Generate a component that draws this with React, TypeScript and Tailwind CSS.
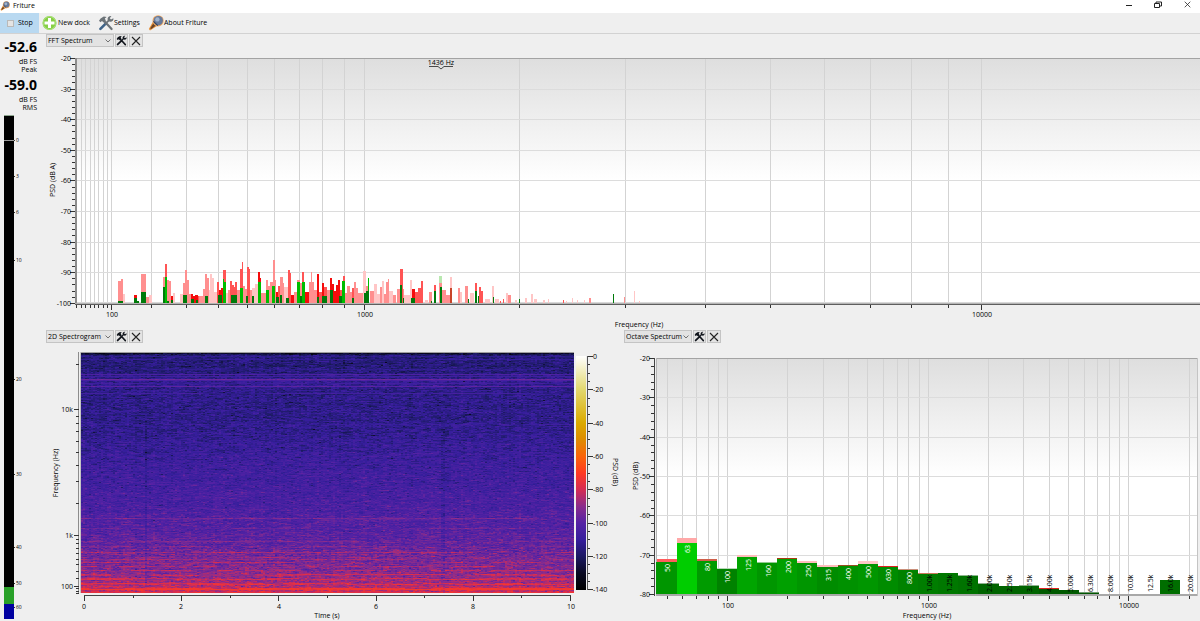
import React from "react";

/* ---------- shared helpers ---------- */

const range = (n: number, start = 0, step = 1) =>
  Array.from({ length: n }, (_, i) => start + i * step);

const mel = (f: number) => 2595 * Math.log10(1 + f / 700);

const LABEL = "fill-black text-[7px]";

const decadeSteps = [
  ...range(8, 20, 10),
  ...range(9, 100, 100),
  ...range(10, 1000, 1000),
];

/* ---------- icons ---------- */

function MicIcon({ className }: { className: string }) {
  return (
    <svg viewBox="0 0 16 16" className={className} aria-hidden="true">
      <path d="M2 15.6 L0.8 14 L5.2 6.2 L9.8 10.6 Z" fill="#e8923a" />
      <path d="M3 14.2 L2.2 13.2 L6 7.4 L8.6 9.9 Z" fill="#6b4426" />
      <circle cx="10.1" cy="5.8" r="5.6" fill="#f0a860" />
      <circle cx="10.3" cy="5.6" r="4.7" fill="#66799a" />
      <circle cx="9.4" cy="4.4" r="2.2" fill="#9fb2cc" />
      <path d="M5.4 6.4 L9.8 10.6" stroke="#34405a" strokeWidth="1.2" />
    </svg>
  );
}

function PlusIcon() {
  return (
    <svg viewBox="0 0 16 16" className="size-4" aria-hidden="true">
      <circle cx="7.5" cy="8" r="7" fill="#86cf45" />
      <circle cx="7.5" cy="8" r="6.4" fill="none" stroke="#b5e48a" strokeWidth="0.8" />
      <path d="M7.5 3V13M2.5 8H12.5" stroke="#ffffff" strokeWidth="3" />
    </svg>
  );
}

function ToolsIcon({
  className,
  metal,
  grip,
}: {
  className: string;
  metal: string;
  grip: string;
}) {
  return (
    <svg viewBox="0 0 16 16" className={className} aria-hidden="true">
      <path d="M6.4 6.2 L13.6 14" stroke={metal} strokeWidth="2.2" strokeLinecap="round" />
      <path d="M1 5.8 L2.6 3.4 L5.8 1.4 L8.6 2 L6.8 3.4 L7.8 5.4 L5.6 7.6 L4 6 L2.4 7.2 Z" fill={metal} />
      <path d="M2.4 13.8 L7.4 8.8" stroke={grip} strokeWidth="2.6" strokeLinecap="round" />
      <path d="M7 9.2 L11.4 4.8" stroke={metal} strokeWidth="1.8" />
      <path d="M13.4 1 L11.8 3.2 L13 4.6 L15.4 3.2 C15.8 5.6 13.8 7.4 11.4 6.6 L9.6 4.8 C9.2 2.4 11.2 0.6 13.4 1 Z" fill={metal} />
    </svg>
  );
}

function CrossIcon({ className }: { className: string }) {
  return (
    <svg viewBox="0 0 10 10" className={className} aria-hidden="true">
      <path d="M1 1 L9 9 M9 1 L1 9" stroke="#222222" strokeWidth="1.1" fill="none" />
    </svg>
  );
}

/* ---------- window chrome ---------- */

function TitleBar() {
  return (
    <header className="flex h-[13px] items-start justify-between bg-white">
      <div className="flex h-[11px] items-center gap-[3px]">
        <MicIcon className="size-[10px]" />
        <h1 className="text-[7px] leading-[10px]">Friture</h1>
      </div>
      <div className="flex h-[9px] items-center gap-[13px] pr-[5px]">
        <button aria-label="Minimize" className="flex w-4 justify-center">
          <svg viewBox="0 0 8 8" className="size-2"><path d="M1 4.5H7" stroke="#222" /></svg>
        </button>
        <button aria-label="Restore" className="flex w-4 justify-center">
          <svg viewBox="0 0 8 8" className="size-2">
            <path d="M0.5 2.5H5.5V6.5H0.5Z M2 2.5V1H7.5V5H5.5" fill="none" stroke="#222" />
          </svg>
        </button>
        <button aria-label="Close" className="flex w-4 justify-center">
          <CrossIcon className="size-[7px]" />
        </button>
      </div>
    </header>
  );
}

function Toolbar() {
  return (
    <nav className="flex h-[21px] items-center gap-2 border-b border-[#d2d2d2] text-[7px] leading-[10px]">
      <div className="flex items-center gap-[3px]">
        <button className="flex h-5 w-[39px] items-center gap-1 bg-[#b9d9f1] pl-[7px]">
          <span className="size-[7px] border border-[#b9b9b9] bg-[#e4e4e4]" />
          Stop
        </button>
        <button className="flex items-center">
          <PlusIcon />
          New dock
        </button>
      </div>
      <button className="flex items-center">
        <ToolsIcon className="size-4" metal="#6c7378" grip="#3e6388" />
        Settings
      </button>
      <button className="flex items-center">
        <MicIcon className="size-4" />
        About Friture
      </button>
    </nav>
  );
}

const dockKinds = ["FFT Spectrum", "2D Spectrogram", "Octave Spectrum"];

function DockControls({ value, id }: { value: string; id: string }) {
  return (
    <div className="flex h-[14px] items-start gap-px pl-[2px]">
      <div className="grid w-[68px] items-center">
        <select
          id={id}
          aria-label="Dock type"
          defaultValue={value}
          className="col-start-1 row-start-1 h-[13px] w-full appearance-none border border-[#c4c4c4] bg-[#e3e3e3] pl-px text-[7px] leading-[10px]"
        >
          {dockKinds.map((k) => (
            <option key={k}>{k}</option>
          ))}
        </select>
        <svg viewBox="0 0 6 4" className="pointer-events-none col-start-1 row-start-1 mr-[3px] h-1 w-[6px] justify-self-end" aria-hidden="true">
          <path d="M0.5 0.5 L3 3 L5.5 0.5" fill="none" stroke="#555" strokeWidth="0.8" />
        </svg>
      </div>
      <button aria-label="Dock settings" className="flex h-[13px] w-[13px] items-center justify-center border border-[#c4c4c4] bg-[#e3e3e3]">
        <ToolsIcon className="size-[11px]" metal="#11151c" grip="#11151c" />
      </button>
      <button aria-label="Close dock" className="flex h-[13px] w-[14px] items-center justify-center border border-[#c4c4c4] bg-[#e3e3e3]">
        <CrossIcon className="size-[10px]" />
      </button>
    </div>
  );
}

/* ---------- level meter ---------- */

const meterTicks: [string, number][] = [
  ["0", 140], ["3", 176], ["6", 212], ["10", 260], ["20", 379],
  ["30", 474], ["40", 547], ["50", 583], ["60", 607],
];

function Levels() {
  return (
    <aside className="w-11 shrink-0 pt-1">
      <div className="pr-[7px] text-right text-[7px] leading-[8px]">
        <p className="text-[14px] leading-[17px] font-bold">-52.6</p>
        <p className="mt-[3px]">dB FS</p>
        <p>Peak</p>
        <p className="mt-[2px] text-[14px] leading-[17px] font-bold">-59.0</p>
        <p className="mt-[3px]">dB FS</p>
        <p>RMS</p>
      </div>
      <svg viewBox="0 112 44 509" className="block w-full">
        <rect x="4" y="116" width="10" height="472" fill="#000" />
        <rect x="4" y="115" width="10" height="1" fill="#8fa790" />
        <rect x="4" y="587" width="10" height="17" fill="#28a028" />
        <rect x="4" y="604" width="10" height="15" fill="#0000a0" />
        <rect x="4" y="140" width="10" height="1" fill="#9a9a9a" />
        {meterTicks.map(([t, y]) => (
          <g key={t}>
            <rect x="14" y={y} width="1" height="1" fill="#333" />
            <text x="16" y={y + 2} className="fill-black text-[5px]">{t}</text>
          </g>
        ))}
      </svg>
    </aside>
  );
}

/* ---------- FFT spectrum ---------- */

const fftX = (f: number) => Math.round(364 + 0.2975 * (mel(f) - mel(1000)));

// p/q/s/r: decaying peak shades, d/g: live level, l: faded level, b: overlap
const tones: Record<string, string> = {
  p: "#ff8f8f", q: "#ffc6c6", s: "#ff5454", r: "#f40c0c",
  d: "#007a0a", g: "#00bd00", l: "#b9e8b0", b: "#c8452a",
};

const fftBars: [string, number, number, number][] = [
  ["p", 118, 121, 281], ["p", 121, 123, 279], ["q", 123, 125, 294], ["d", 118, 123, 301],
  ["r", 134, 137, 295], ["d", 134, 137, 298], ["d", 137, 139, 301],
  ["p", 141, 146, 274], ["d", 141, 146, 292], ["p", 146, 149, 297], ["q", 149, 152, 295],
  ["p", 163, 165, 277], ["s", 165, 167, 264], ["d", 163, 165, 287], ["g", 165, 167, 277],
  ["p", 167, 169, 280], ["p", 169, 171, 281], ["r", 171, 173, 296], ["q", 173, 175, 293], ["d", 171, 173, 300], ["d", 167, 169, 301],
  ["q", 180, 183, 294], ["p", 183, 185, 283], ["p", 185, 187, 270], ["p", 187, 189, 280], ["d", 183, 187, 295],
  ["p", 189, 191, 294], ["r", 191, 193, 294], ["r", 193, 195, 296], ["r", 195, 198, 295], ["s", 198, 199, 296], ["d", 191, 194, 299], ["d", 196, 198, 300],
  ["p", 199, 203, 296], ["p", 203, 205, 289], ["p", 205, 207, 274], ["p", 207, 209, 278], ["d", 205, 208, 296],
  ["q", 209, 210, 290], ["q", 210, 212, 274], ["q", 212, 214, 278], ["q", 214, 217, 292],
  ["s", 217, 219, 282], ["r", 219, 221, 290], ["r", 221, 223, 288], ["s", 223, 226, 270], ["d", 218, 222, 295], ["g", 223, 224, 279], ["g", 224, 226, 282],
  ["q", 226, 228, 293], ["p", 228, 230, 290], ["s", 230, 232, 281], ["s", 232, 234, 285], ["s", 234, 235, 287], ["s", 235, 237, 282], ["d", 231, 237, 295], ["d", 233, 235, 298],
  ["p", 237, 240, 290], ["s", 240, 242, 269], ["s", 242, 243, 262], ["g", 240, 243, 288],
  ["p", 243, 245, 286], ["p", 245, 247, 289], ["s", 247, 249, 267], ["s", 249, 250, 269], ["d", 246, 248, 296], ["p", 250, 252, 290], ["q", 252, 255, 288], ["q", 255, 258, 284], ["d", 252, 254, 296],
  ["r", 258, 260, 272], ["r", 260, 261, 278], ["g", 258, 261, 282], ["p", 261, 266, 293], ["p", 266, 268, 280], ["p", 268, 270, 286], ["p", 270, 273, 282], ["g", 266, 269, 290],
  ["p", 273, 275, 260], ["p", 275, 276, 280], ["g", 272, 275, 286], ["r", 276, 278, 292], ["s", 278, 280, 286], ["p", 280, 283, 277], ["d", 276, 279, 297], ["d", 280, 282, 295],
  ["p", 283, 284, 283], ["q", 284, 288, 287], ["s", 288, 290, 270], ["s", 290, 291, 273], ["r", 291, 294, 295], ["d", 286, 289, 298], ["p", 294, 297, 292],
  ["p", 297, 300, 280], ["g", 297, 300, 282], ["p", 300, 302, 283], ["d", 300, 303, 296],
  ["s", 302, 304, 272], ["g", 302, 305, 282], ["r", 305, 309, 292], ["p", 309, 311, 282], ["p", 311, 312, 272], ["p", 312, 314, 282], ["p", 314, 317, 290],
  ["r", 317, 319, 274], ["s", 319, 322, 292], ["r", 322, 324, 283], ["d", 317, 319, 297], ["s", 324, 327, 287], ["p", 327, 330, 290], ["d", 322, 327, 296],
  ["r", 330, 332, 278], ["r", 332, 334, 284], ["d", 330, 333, 290], ["r", 334, 336, 291], ["r", 336, 338, 285], ["r", 338, 340, 280], ["s", 340, 343, 290], ["d", 339, 342, 296],
  ["s", 343, 345, 276], ["g", 342, 345, 281], ["p", 345, 347, 293], ["p", 347, 350, 286], ["p", 350, 352, 292], ["s", 352, 354, 288], ["p", 354, 356, 282], ["d", 352, 354, 298],
  ["p", 356, 358, 288], ["p", 358, 363, 293], ["q", 363, 366, 271], ["p", 366, 368, 286], ["d", 364, 367, 293], ["g", 368, 369, 278], ["d", 366, 369, 291],
  ["p", 370, 374, 291], ["q", 374, 377, 284], ["q", 377, 380, 294], ["p", 380, 382, 287], ["q", 382, 384, 281], ["p", 384, 386, 294], ["p", 386, 388, 282], ["p", 388, 389, 279],
  ["q", 389, 393, 291], ["p", 393, 396, 295], ["p", 397, 400, 289], ["s", 400, 403, 269], ["d", 400, 402, 285], ["p", 403, 404, 289], ["q", 404, 410, 295], ["d", 403, 404, 298],
  ["q", 410, 412, 280], ["r", 412, 415, 289], ["s", 415, 418, 292], ["s", 418, 421, 288], ["s", 421, 423, 281], ["d", 411, 415, 298], ["q", 425, 428, 300],
  ["p", 429, 432, 292], ["d", 431, 432, 301], ["s", 434, 436, 285], ["d", 434, 436, 291], ["l", 439, 442, 276], ["p", 439, 442, 283], ["d", 440, 442, 287],
  ["p", 442, 446, 290], ["p", 446, 450, 295], ["q", 450, 452, 277], ["b", 450, 452, 288], ["p", 458, 460, 288], ["q", 460, 462, 292],
  ["p", 465, 468, 286], ["d", 468, 469, 299], ["q", 470, 474, 293], ["s", 475, 477, 283], ["d", 475, 477, 291], ["s", 479, 481, 287], ["s", 481, 483, 291], ["d", 478, 479, 296],
  ["q", 485, 490, 299], ["q", 492, 494, 286], ["d", 493, 494, 297], ["q", 495, 499, 299], ["s", 500, 501, 301], ["s", 503, 504, 299], ["q", 506, 508, 293], ["p", 508, 511, 295],
  ["q", 515, 517, 300], ["d", 519, 520, 299], ["q", 525, 527, 298], ["q", 531, 533, 294], ["q", 534, 537, 299], ["q", 543, 545, 300], ["q", 548, 549, 299],
  ["s", 563, 564, 300], ["q", 566, 567, 301], ["q", 572, 573, 298], ["q", 577, 578, 300], ["q", 584, 585, 300], ["p", 589, 591, 298],
  ["d", 613, 614, 294], ["p", 624, 625, 297], ["q", 634, 635, 291], ["q", 639, 640, 301],
];

function FftChart() {
  return (
    <svg viewBox="44 48 1156 282" className="block w-full" role="img" aria-label="FFT spectrum">
      <defs>
        <linearGradient id="fftShade" x1="0" y1="0" x2="0" y2="1">
          <stop offset="0" stopColor="#dedede" />
          <stop offset="0.5" stopColor="#ffffff" />
        </linearGradient>
      </defs>
      <rect x="77" y="58" width="1123" height="245" fill="url(#fftShade)" />
      <g shapeRendering="crispEdges">
        {decadeSteps.map((f) => (
          <rect key={f} x={fftX(f)} y="58" width="1" height="245" fill="#d3d3d3" />
        ))}
        {range(9).map((i) => (
          <rect key={i} x="77" y={Math.round(58 + i * 30.6)} width="1123" height="1" fill="#dcdcdc" />
        ))}
        <rect x="77" y="302" width="1123" height="1" fill="#d8d8d8" />
        {fftBars.map(([t, a, b, top], i) => (
          <rect key={i} x={a} y={top} width={b - a} height={303 - top} fill={tones[t]} />
        ))}
        <rect x="75" y="58" width="1125" height="1" fill="#a3a3a3" />
        <rect x="75" y="58" width="2" height="246" fill="#8c8c8c" />
        <rect x="75" y="303" width="1125" height="1" fill="#b5b5b5" />
        <rect x="75" y="304" width="1125" height="1" fill="#5e5e5e" />
        {range(41).map((i) => (
          <rect key={i} x={i % 5 ? 72 : 70} y={Math.round(58 + i * 6.12)} width={i % 5 ? 3 : 5} height="1" fill="#333" />
        ))}
        {decadeSteps.map((f) => (
          <rect key={f} x={fftX(f)} y="305" width="1" height={[100, 1000, 10000].includes(f) ? 5 : 3} fill="#333" />
        ))}
      </g>
      {range(9).map((i) => (
        <text key={i} x="71" y={Math.round(61 + i * 30.6)} textAnchor="end" className={LABEL}>
          {-20 - i * 10}
        </text>
      ))}
      {[100, 1000, 10000].map((f) => (
        <text key={f} x={fftX(f) + 1} y="317" textAnchor="middle" className={LABEL}>{f}</text>
      ))}
      <text x="639" y="327" textAnchor="middle" className={LABEL}>Frequency (Hz)</text>
      <text transform="translate(55 180) rotate(-90)" textAnchor="middle" className={LABEL}>PSD (dB A)</text>
      <text x="441" y="65" textAnchor="middle" className={LABEL}>1436 Hz</text>
      <path d="M429 66.5H438L441 69L444 66.5H453" fill="none" stroke="#222" strokeWidth="0.8" />
    </svg>
  );
}

/* ---------- spectrogram ---------- */

type Stop = [number, number, number, number];

const colorStops: Stop[] = [
  [0, 255, 255, 255], [-20, 226, 216, 110], [-40, 219, 170, 0], [-50, 222, 140, 0],
  [-60, 250, 100, 10], [-70, 255, 58, 34], [-80, 212, 44, 84], [-90, 138, 44, 140],
  [-100, 84, 34, 164], [-110, 54, 30, 156], [-120, 28, 26, 98], [-130, 10, 10, 34], [-140, 0, 0, 0],
];

function colorFor(db: number) {
  const v = Math.max(-140, Math.min(0, db));
  for (let i = 1; i < colorStops.length; i++) {
    const a = colorStops[i - 1];
    const b = colorStops[i];
    if (v >= b[0]) {
      const t = (a[0] - v) / (a[0] - b[0]);
      const c = [1, 2, 3].map((k) => Math.round(a[k] + (b[k] - a[k]) * t));
      return `rgb(${c[0]},${c[1]},${c[2]})`;
    }
  }
  return "#000";
}

// background noise floor (row, dB)
const floorProfile: [number, number][] = [
  [353, -128], [355, -117], [372, -115], [380, -111], [390, -113], [420, -113], [445, -110],
  [480, -106], [510, -103], [535, -99], [555, -95], [575, -90], [585, -85], [593, -80],
];

// steady tones (row, gain, chance that a segment is lit)
const steadyTones: [number, number, number][] = [
  [356, 5, 1], [359, 4, 0.8], [369, 4, 0.7], [374, 11, 1], [376, 6, 1], [379, 15, 1], [380, 7, 1], [383, 5, 0.8],
  [386, 13, 1], [393, 7, 0.9], [424, 4, 0.5], [518, 8, 0.9], [519, 4, 0.5], [528, 4, 0.4], [535, 4, 0.5], [541, 5, 0.5], [546, 6, 0.5],
  [552, 9, 0.6], [557, 6, 0.4], [559, 6, 0.5], [562, 9, 0.5], [566, 8, 0.5], [570, 10, 0.6],
  [574, 8, 0.6], [575, 7, 0.6], [578, 8, 0.6], [579, 8, 0.7], [583, 8, 0.6], [584, 8, 0.7],
  [588, 12, 0.9], [589, 12, 0.9], [592, 4, 0.7],
];

function buildSpectrogram() {
  let seed = 20117;
  const rnd = () => {
    seed = (seed * 1664525 + 1013904223) >>> 0;
    return seed / 4294967296;
  };
  const gauss = () => rnd() + rnd() + rnd() + rnd() - 2;
  const cols = 247;
  const columnDrift = range(cols).map(() => gauss() * 1);
  const paths = new Map<number, string[]>();
  for (let y = 353; y < 593; y++) {
    const k = floorProfile.findIndex(([r]) => r > y);
    const [y0, d0] = floorProfile[k - 1];
    const [y1, d1] = floorProfile[k];
    const base = d0 + ((d1 - d0) * (y - y0)) / (y1 - y0);
    const line = steadyTones.find(([r]) => r === y);
    const rowDrift = gauss() * 1;
    let lit = true;
    let noise = 0;
    let runStart = 0;
    let runKey = NaN;
    for (let c = 0; c <= cols; c++) {
      let key = NaN;
      if (c < cols) {
        if (line && rnd() < 0.1) lit = rnd() < line[2];
        noise = noise * 0.4 + gauss() * (y > 545 ? 6.4 : 5.4);
        const x = 81 + c * 2;
        const dip = y > 420 && (Math.abs(x - 145) < 2 || Math.abs(x - 442) < 3) ? -4 : 0;
        const soft = line ? (y < 400 ? 0.3 : 0.7) : 1;
        const dark = rnd() < 0.02 ? -7 : 0;
        const v = base + rowDrift + columnDrift[c] + dip + (noise + dark) * soft + (line && lit ? line[1] : 0);
        key = Math.round(Math.max(-136, Math.min(-72, v)) / 2) * 2;
      }
      if (key !== runKey) {
        if (!Number.isNaN(runKey)) {
          const x = 81 + runStart * 2;
          const w = Math.min((c - runStart) * 2, 574 - x);
          const list = paths.get(runKey) ?? [];
          list.push(`M${x} ${y}h${w}v1h-${w}z`);
          paths.set(runKey, list);
        }
        runKey = key;
        runStart = c;
      }
    }
  }
  return [...paths].map(([db, d]) => ({ fill: colorFor(db), d: d.join("") }));
}

const spectrogram = buildSpectrogram();
const specY = (f: number) => Math.round(595.4 - 0.0607 * mel(f));
const specTicks = [...range(4, 25, 25), ...range(9, 200, 100), ...range(9, 2000, 1000), 20000];

function SpectrogramChart() {
  return (
    <svg viewBox="44 344 578 277" className="block w-full" role="img" aria-label="2D spectrogram">
      <defs>
        <linearGradient id="dbScale" x1="0" y1="0" x2="0" y2="1">
          {colorStops.map(([db]) => (
            <stop key={db} offset={-db / 140} stopColor={colorFor(db)} />
          ))}
        </linearGradient>
      </defs>
      <g shapeRendering="crispEdges">
        {spectrogram.map((p) => (
          <path key={p.fill} d={p.d} fill={p.fill} />
        ))}
        <rect x="80" y="352" width="494" height="1" fill="#a0a0a0" />
        <rect x="80" y="352" width="1" height="241" fill="#c4c4c4" />
        <rect x="78" y="352" width="1" height="241" fill="#8c8c8c" />
        {specTicks.map((f) => {
          const major = [100, 1000, 10000].includes(f);
          return <rect key={f} x={major ? 74 : 76} y={specY(f)} width={major ? 5 : 3} height="1" fill="#333" />;
        })}
        <rect x="84" y="595" width="487" height="1" fill="#444" />
        {range(11).map((i) => (
          <rect key={i} x={Math.round(84 + i * 48.6)} y="596" width="1" height={i % 2 ? 2 : 5} fill="#333" />
        ))}
        <rect x="576" y="356" width="10" height="234" fill="url(#dbScale)" />
        <rect x="587" y="356" width="1" height="234" fill="#555" />
        {range(29).map((i) => (
          <rect key={i} x="588" y={Math.round(356 + i * 8.33)} width={i % 4 ? 2 : 5} height="1" fill="#333" />
        ))}
      </g>
      {[["10k", 10000], ["1k", 1000], ["100", 100]].map(([t, f]) => (
        <text key={t} x="73" y={specY(f as number) + 3} textAnchor="end" className={LABEL}>{t}</text>
      ))}
      {range(6).map((i) => (
        <text key={i} x={Math.round(84 + i * 97.3)} y="609" textAnchor="middle" className={LABEL}>{i * 2}</text>
      ))}
      {range(8).map((i) => (
        <text key={i} x="593" y={Math.round(359 + i * 33.3)} className={LABEL}>{i ? -20 * i : 0}</text>
      ))}
      <text x="327" y="618" textAnchor="middle" className={LABEL}>Time (s)</text>
      <text transform="translate(58 473) rotate(-90)" textAnchor="middle" className={LABEL}>Frequency (Hz)</text>
      <text transform="translate(613 472) rotate(90)" textAnchor="middle" className={LABEL}>PSD (dB)</text>
    </svg>
  );
}

/* ---------- octave spectrum ---------- */

const octX = (f: number) => Math.round(727 + 200.7 * Math.log10(f / 100));
const octSteps = [...range(5, 50, 10), ...range(9, 100, 100), ...range(9, 1000, 1000), 10000, 20000];

// label, bar top, bar colour, peak top, peak colour
const octBands: [string, number, string, number, string][] = [
  ["50", 562, "#009600", 559, "#ff5c5c"], ["63", 543, "#00cd00", 538, "#ffa8a8"],
  ["80", 561, "#009b00", 559, "#cf5f4a"], ["100", 569, "#008200", 568, "#b8d8b8"],
  ["125", 557, "#00a500", 555, "#ffbcbc"], ["160", 563, "#009600", 562, "#8fc98f"],
  ["200", 559, "#00a000", 558, "#a83c10"], ["250", 563, "#009600", 561, "#ffbcbc"],
  ["315", 567, "#008c00", 565, "#ffbcbc"], ["400", 566, "#009100", 565, "#96501e"],
  ["500", 564, "#009600", 561, "#ffc8c8"], ["630", 567, "#008c00", 566, "#e02020"],
  ["800", 570, "#008200", 569, "#c98f7a"], ["1.00k", 574, "#007d00", 573, "#c9785a"],
  ["1.25k", 573, "#007800", 573, "#007800"], ["1.60k", 576, "#007300", 575, "#8fb88f"],
  ["2.00k", 584, "#006400", 583, "#8fb08f"], ["2.50k", 586, "#006400", 586, "#006400"],
  ["3.15k", 586, "#006400", 585, "#8fb08f"], ["4.00k", 589, "#005a00", 588, "#e02020"],
  ["5.00k", 590, "#005a00", 590, "#005a00"], ["6.30k", 593, "#005500", 592, "#6f9a6f"],
  ["8.00k", 594, "#005500", 594, "#005500"], ["10.0k", 594, "#005500", 594, "#005500"],
  ["12.5k", 594, "#005500", 594, "#005500"], ["16.0k", 580, "#006e00", 580, "#006e00"],
  ["20.0k", 594, "#005500", 594, "#005500"],
];

const bandEdge = (i: number) => Math.min(1197, Math.round(656.4 + i * 20.13));

function OctaveChart() {
  return (
    <svg viewBox="622 344 578 277" className="block w-full" role="img" aria-label="Octave spectrum">
      <defs>
        <linearGradient id="octShade" x1="0" y1="0" x2="0" y2="1">
          <stop offset="0" stopColor="#dedede" />
          <stop offset="0.5" stopColor="#ffffff" />
        </linearGradient>
      </defs>
      <rect x="656" y="358" width="541" height="236" fill="url(#octShade)" />
      <g shapeRendering="crispEdges">
        {octSteps.map((f) => (
          <rect key={f} x={octX(f)} y="358" width="1" height="236" fill="#d3d3d3" />
        ))}
        {range(6).map((i) => (
          <rect key={i} x="656" y={Math.round(358 + i * 39.3)} width="541" height="1" fill="#dcdcdc" />
        ))}
        {octBands.map(([t, top, fill, peak, peakFill], i) => (
          <g key={t}>
            <rect x={bandEdge(i)} y={peak} width={bandEdge(i + 1) - bandEdge(i)} height={top - peak} fill={peakFill} />
            <rect x={bandEdge(i)} y={top} width={bandEdge(i + 1) - bandEdge(i)} height={594 - top} fill={fill} />
          </g>
        ))}
        <rect x="656" y="358" width="541" height="1" fill="#a3a3a3" />
        <rect x="656" y="358" width="1" height="204" fill="#b5b5b5" />
        <rect x="1197" y="358" width="1" height="238" fill="#c4c4c4" />
        <rect x="654" y="358" width="1" height="238" fill="#444" />
        <rect x="656" y="594" width="541" height="2" fill="#a8a8a8" />
        {range(31).map((i) => (
          <rect key={i} x={i % 5 ? 651 : 649} y={Math.round(358 + i * 7.87)} width={i % 5 ? 3 : 5} height="1" fill="#333" />
        ))}
        {octSteps.map((f) => (
          <rect key={f} x={octX(f)} y="596" width="1" height={[100, 1000, 10000].includes(f) ? 5 : 3} fill="#333" />
        ))}
      </g>
      {octBands.map(([t, top], i) => {
        const x = Math.round(670 + i * 20.13);
        return i < 13 ? (
          <text key={t} transform={`translate(${x} ${top + 2}) rotate(-90)`} textAnchor="end" className="fill-white text-[7px]">{t}</text>
        ) : (
          <text key={t} transform={`translate(${x} 592) rotate(-90)`} className={LABEL}>{t}</text>
        );
      })}
      {range(7).map((i) => (
        <text key={i} x="650" y={Math.round(361 + i * 39.3)} textAnchor="end" className={LABEL}>{-20 - i * 10}</text>
      ))}
      {[100, 1000, 10000].map((f) => (
        <text key={f} x={octX(f) + 1} y="608" textAnchor="middle" className={LABEL}>{f}</text>
      ))}
      <text x="927" y="618" textAnchor="middle" className={LABEL}>Frequency (Hz)</text>
      <text transform="translate(638 476) rotate(-90)" textAnchor="middle" className={LABEL}>PSD (dB)</text>
    </svg>
  );
}

/* ---------- page ---------- */

export default function App() {
  return (
    <div className="min-h-screen bg-[#efefef] font-['Open_Sans','Noto_Sans',sans-serif] text-black">
      <TitleBar />
      <Toolbar />
      <div className="flex">
        <Levels />
        <main className="min-w-0 flex-1">
          <section>
            <DockControls id="dock-fft" value="FFT Spectrum" />
            <FftChart />
          </section>
          <div className="grid grid-cols-2">
            <section>
              <DockControls id="dock-spectrogram" value="2D Spectrogram" />
              <SpectrogramChart />
            </section>
            <section>
              <DockControls id="dock-octave" value="Octave Spectrum" />
              <OctaveChart />
            </section>
          </div>
        </main>
      </div>
    </div>
  );
}
